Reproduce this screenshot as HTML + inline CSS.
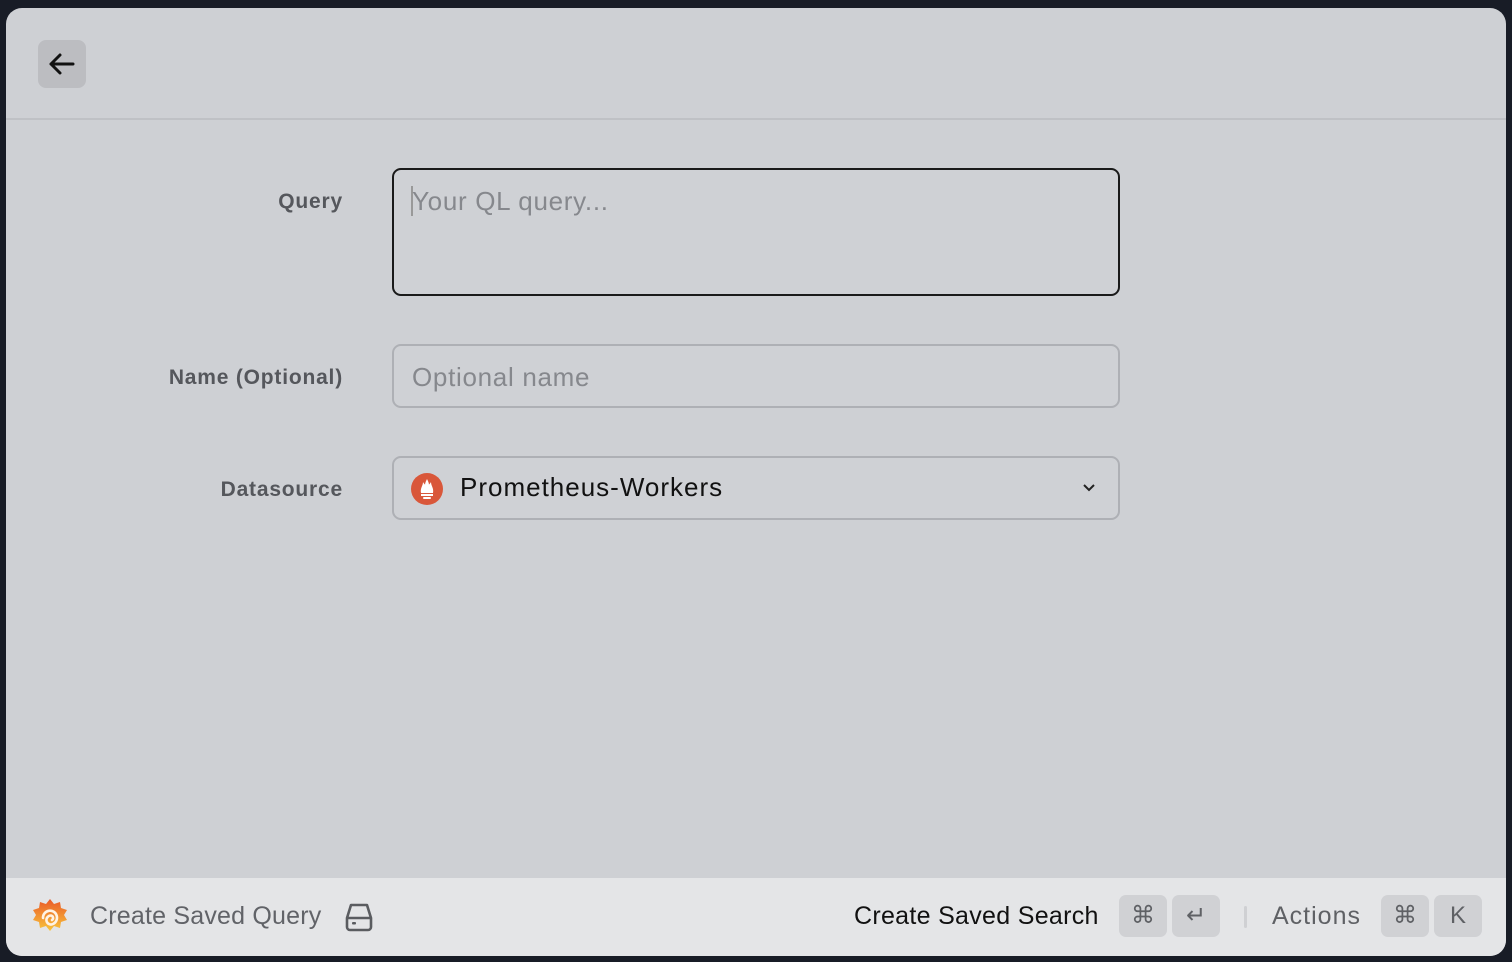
<!DOCTYPE html>
<html><head><meta charset="utf-8"><style>
*{box-sizing:border-box;margin:0;padding:0}
body{width:1512px;height:962px;background:#181c26;font-family:"Liberation Sans",sans-serif;position:relative;overflow:hidden}
.win{position:absolute;left:6px;top:8px;width:1500px;height:948px;background:#ced0d4;border-radius:16px;overflow:hidden}
.back{position:absolute;left:32px;top:32px;width:48px;height:48px;border-radius:8px;background:#bcbdc1}
.hr{position:absolute;left:0;right:0;top:110px;height:2px;background:#bfc1c5}
.lbl{position:absolute;right:1163px;font-size:21px;color:#55575c;font-weight:bold;letter-spacing:.8px}
.box{position:absolute;left:386px;width:728px;border:2px solid #aeb0b5;border-radius:9px;background:#cfd1d5}
.ph{position:absolute;left:18px;font-size:26px;color:#86888d;letter-spacing:.7px}
.foot{position:absolute;left:0;right:0;top:870px;height:78px;background:#e4e5e7}
.ft{position:absolute;top:24px;font-size:25px}
.key{position:absolute;top:17px;width:48px;height:42px;border-radius:7px;background:#d0d1d4;color:#5f6165;font-size:24px;text-align:center;line-height:42px}
</style></head><body>
<div class="win">
<div class="back"><svg width="48" height="48" viewBox="0 0 48 48"><path d="M35 24H13M22 15l-9 9 9 9" stroke="#111" stroke-width="3" fill="none" stroke-linecap="round" stroke-linejoin="round"/></svg></div>
<div class="hr"></div>
<div class="lbl" style="top:182px">Query</div>
<div class="box" style="top:160px;height:128px;border-color:#1a1a1a;"><div style="position:absolute;left:17px;top:16px;width:2px;height:30px;background:#999"></div><div class="ph" style="top:16px">Your QL query...</div></div>
<div class="lbl" style="top:358px">Name (Optional)</div>
<div class="box" style="top:336px;height:64px"><div class="ph" style="top:16px">Optional name</div></div>
<div class="lbl" style="top:470px">Datasource</div>
<div class="box" style="top:448px;height:64px">
<svg style="position:absolute;left:17px;top:15px" width="32" height="32" viewBox="0 0 32 32"><circle cx="16" cy="16" r="16" fill="#d9573a"/><path d="M10 20c-1-5 2-7 2-11 1 2 2 2 2 3 0-2 1-4 2-6 1 2 2 4 2 6 0-1 1-1 2-3 0 4 3 6 2 11z" fill="#fff"/><rect x="10" y="21" width="12" height="2" fill="#fff"/><rect x="12" y="24" width="8" height="2" rx="1" fill="#fff"/></svg>
<div style="position:absolute;left:66px;top:14px;font-size:26px;color:#111;letter-spacing:1px">Prometheus-Workers</div>
<svg style="position:absolute;right:22px;top:24px" width="14" height="10" viewBox="0 0 14 10"><path d="M2 3l5 5 5-5" stroke="#222" stroke-width="2" fill="none"/></svg>
</div>
<div class="foot">
<svg style="position:absolute;left:23px;top:18px" width="42" height="42" viewBox="0 0 42 42"><defs><linearGradient id="g" x1="0" y1="0" x2="0" y2="1"><stop offset="0" stop-color="#ea5a28"/><stop offset="1" stop-color="#f8c53c"/></linearGradient></defs><path d="M21 3l4 5 6-2 1 6 6 2-3 5 3 5-6 2-1 6-6-2-4 5-4-5-6 2-1-6-6-2 3-5-3-5 6-2 1-6 6 2z" fill="url(#g)"/><path d="M14 22a7 7 0 1 1 10 6M24 28a4.5 4.5 0 1 1 -2-8.5 2.5 2.5 0 0 1 1 4.5" stroke="#fff3e4" stroke-width="2.6" fill="none" stroke-linecap="round"/></svg>
<div class="ft" style="left:84px;color:#616368;letter-spacing:.2px">Create Saved Query</div>
<svg style="position:absolute;left:337px;top:22px" width="32" height="34" viewBox="0 0 32 34"><path d="M4 18L8 5h16l4 13v9a3 3 0 0 1-3 3H7a3 3 0 0 1-3-3z M4 18h24" stroke="#5a5c60" stroke-width="2.6" fill="none" stroke-linejoin="round"/><rect x="9" y="22" width="4" height="2.5" rx="1" fill="#5a5c60"/></svg>
<div class="ft" style="left:848px;color:#111;letter-spacing:.3px">Create Saved Search</div>
<div class="key" style="left:1113px">⌘</div>
<div class="key" style="left:1166px">↵</div>
<div style="position:absolute;left:1238px;top:28px;width:3px;height:22px;background:#cfd0d3;border-radius:2px"></div>
<div class="ft" style="left:1266px;color:#5f6165;letter-spacing:1px">Actions</div>
<div class="key" style="left:1375px">⌘</div>
<div class="key" style="left:1428px">K</div>
</div>
</div>
</body></html>
